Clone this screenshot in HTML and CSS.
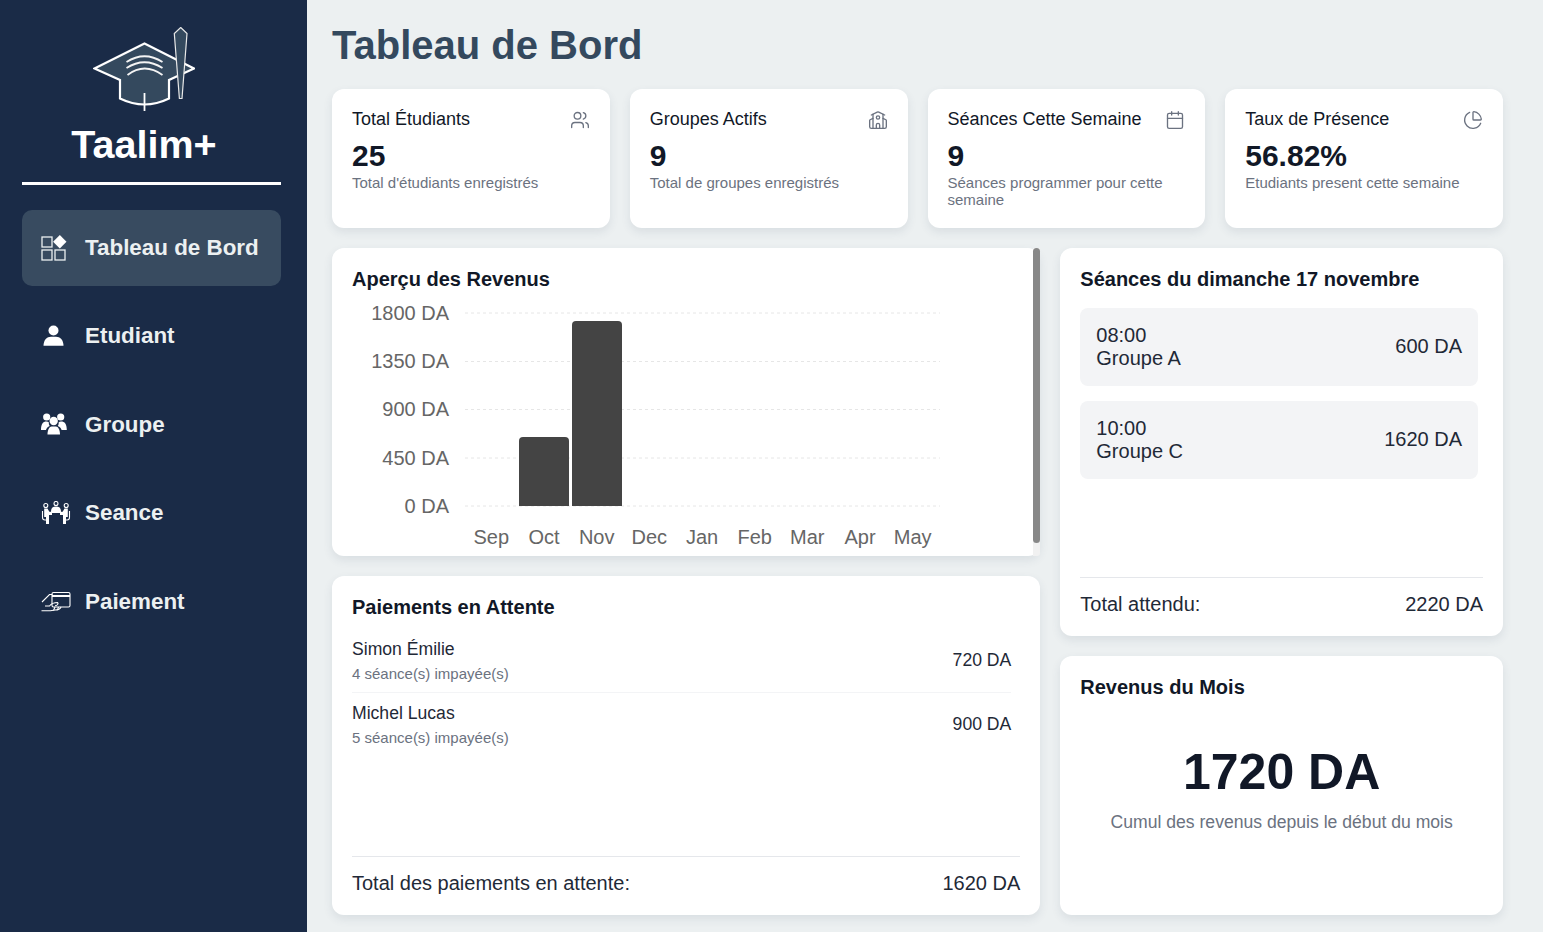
FILE: index.html
```html
<!DOCTYPE html>
<html lang="fr">
<head>
<meta charset="utf-8">
<title>Taalim+ - Tableau de Bord</title>
<link rel="stylesheet" href="styles.css">
</head>
<body>
<aside class="sidebar">
  <div class="brand">
    <svg class="logo" width="102" height="84" viewBox="92 27 102 84">
      <path class="logo-cap" d="M93.5 68.5 143.500 43.500 193 68.500 168 80V98.500Q143.500 110.500 119 98.500V80Z"/>
      <path class="logo-tick" d="M143.500 93V111"/>
      <path class="logo-wave" d="M125.500 62Q143.500 50.500 161.500 62M125.500 68Q143.500 56.500 161.500 68M126.500 75Q143.500 62 161.500 75"/>
      <path class="logo-tassel" d="M179.700 27.500 186 33.500 181 98.500H178.400L173.300 33.500Z"/>
    </svg>
    <div class="brand-name">Taalim+</div>
  </div>
  <nav class="nav">
    <a class="nav-item active">
      <span class="nav-icon">
        <svg width="30" height="26" viewBox="41 235 30 26">
          <g class="outline"><rect x="42" y="237" width="10" height="10"/><rect x="42" y="250" width="10" height="10"/><rect x="55" y="250" width="10" height="10"/></g>
          <path class="solid" d="M59.800 235 66.500 241.700 59.800 248.400 53.100 241.700Z"/>
        </svg>
      </span>
      <span>Tableau de Bord</span>
    </a>
    <a class="nav-item">
      <span class="nav-icon">
        <svg width="30" height="24" viewBox="41 325 30 24">
          <circle class="solid" cx="53.500" cy="331.500" r="5"/>
          <path class="solid" d="M43.500 346.800C43.500 341 47 337.800 51 337.800H56C60 337.800 63.500 341 63.500 346.800Z"/>
        </svg>
      </span>
      <span>Etudiant</span>
    </a>
    <a class="nav-item">
      <span class="nav-icon">
        <svg width="30" height="24" viewBox="41 413 30 24">
          <circle class="solid" cx="46.700" cy="417" r="3.600"/>
          <circle class="solid" cx="60.700" cy="417" r="3.600"/>
          <path class="solid" d="M41 430C41 424 43 421.500 46.500 421.500C47.500 421.500 48.300 421.800 48.800 422.200C48.800 424 49 425 49.800 426C47.500 427 46.300 428.500 46 430Z"/>
          <path class="solid" d="M66.800 430C66.800 424 64.800 421.500 61 421.500C60 421.500 59.200 421.800 58.700 422.200C58.700 424 58.500 425 57.700 426C60 427 61.300 428.500 61.600 430Z"/>
          <circle class="solid" cx="53.700" cy="421" r="4.200"/>
          <path class="solid" d="M47.500 434.500C47.500 429.500 49.500 426.500 51.500 426.500H56C58 426.500 60 429.500 60 434.500Z"/>
        </svg>
      </span>
      <span>Groupe</span>
    </a>
    <a class="nav-item">
      <span class="nav-icon">
        <svg width="30" height="24" viewBox="41 504 30 24">
          <g class="thin">
            <circle cx="56" cy="506.500" r="2"/>
            <circle cx="45.800" cy="508.500" r="2"/>
            <circle cx="66.200" cy="508.500" r="2"/>
            <path d="M42.500 514V520.500C42.500 522 43.500 523 45 523H47"/>
            <path d="M69.500 514V520.500C69.500 522 68.500 523 67 523H65"/>
          </g>
          <path class="solid" d="M51 515C51 511 52.500 509.500 56 509.500S61 511 61 515Z"/>
          <path class="solid" d="M48 514.800H64V516H48Z"/>
          <path class="solid" d="M44.200 511.500H47.500L50 516H52V518H49V527H46V520H44.200Z"/>
          <path class="solid" d="M67.800 511.500H64.500L62 516H60V518H63V527H66V520H67.800Z"/>
        </svg>
      </span>
      <span>Seance</span>
    </a>
    <a class="nav-item">
      <span class="nav-icon">
        <svg width="30" height="22" viewBox="41 592 30 22">
          <g class="thin">
            <path d="M42 603 49.500 595.500H52.500"/>
            <rect x="52" y="593.500" width="18" height="14.500" rx="1.500"/>
            <path d="M41.500 611.800H50.500L55 611C57.500 611 60 610.500 61 608"/>
            <path d="M45 607H49.500C51.500 604.500 53 603.500 57.500 603.500 58.800 604.800 57.500 606.500 55 606.800"/>
            <path d="M55 608 53.500 611.500M58.500 608 57.500 611"/>
          </g>
          <path class="solid" d="M52 596H70V598H52Z"/>
        </svg>
      </span>
      <span>Paiement</span>
    </a>
  </nav>
</aside>

<main class="main">
  <h1 class="page-title">Tableau de Bord</h1>

  <section class="stats">
    <article class="card stat">
      <div class="stat-head">
        <h3 class="stat-title">Total Étudiants</h3>
        <svg class="stat-icon" viewBox="0 0 24 24"><path d="M16 21v-2a4 4 0 0 0-4-4H6a4 4 0 0 0-4 4v2"/><circle cx="9" cy="7" r="4"/><path d="M22 21v-2a4 4 0 0 0-3-3.870"/><path d="M16 3.130a4 4 0 0 1 0 7.750"/></svg>
      </div>
      <div class="stat-value">25</div>
      <p class="stat-desc">Total d'étudiants enregistrés</p>
    </article>
    <article class="card stat">
      <div class="stat-head">
        <h3 class="stat-title">Groupes Actifs</h3>
        <svg class="stat-icon" viewBox="0 0 24 24"><path d="M14 22v-4a2 2 0 1 0-4 0v4"/><path d="m18 10 3.447 1.724a1 1 0 0 1 .553.894V20a2 2 0 0 1-2 2H4a2 2 0 0 1-2-2v-7.382a1 1 0 0 1 .553-.894L6 10"/><path d="M18 5v17"/><path d="m4 6 7.106-3.553a2 2 0 0 1 1.788 0L20 6"/><path d="M6 5v17"/><circle cx="12" cy="9" r="2"/></svg>
      </div>
      <div class="stat-value">9</div>
      <p class="stat-desc">Total de groupes enregistrés</p>
    </article>
    <article class="card stat">
      <div class="stat-head">
        <h3 class="stat-title">Séances Cette Semaine</h3>
        <svg class="stat-icon" viewBox="0 0 24 24"><path d="M8 2v4"/><path d="M16 2v4"/><rect width="18" height="18" x="3" y="4" rx="2"/><path d="M3 10h18"/></svg>
      </div>
      <div class="stat-value">9</div>
      <p class="stat-desc">Séances programmer pour cette semaine</p>
    </article>
    <article class="card stat">
      <div class="stat-head">
        <h3 class="stat-title">Taux de Présence</h3>
        <svg class="stat-icon" viewBox="0 0 24 24"><path d="M21 12c.552 0 1.005-.449.95-.998a10 10 0 0 0-8.953-8.951c-.55-.055-.998.398-.998.95v8a1 1 0 0 0 1 1z"/><path d="M21.210 15.890A10 10 0 1 1 8 2.830"/></svg>
      </div>
      <div class="stat-value">56.82%</div>
      <p class="stat-desc">Etudiants present cette semaine</p>
    </article>
  </section>

  <section class="panels">
    <div class="col col-left">
      <article class="card chart-card">
        <h2 class="card-title">Aperçu des Revenus</h2>
        <svg class="chart" width="600" height="252" viewBox="352 298 600 252">
          <g class="grid">
            <path d="M465 313H940"/><path d="M465 361.500H940"/><path d="M465 409.500H940"/><path d="M465 458H940"/><path d="M465 506H940"/>
          </g>
          <g class="y-labels">
            <text x="449" y="320">1800 DA</text>
            <text x="449" y="368">1350 DA</text>
            <text x="449" y="416">900 DA</text>
            <text x="449" y="465">450 DA</text>
            <text x="449" y="513">0 DA</text>
          </g>
          <path class="bar" d="M519 506V441a4 4 0 0 1 4-4h42a4 4 0 0 1 4 4V506Z"/>
          <path class="bar" d="M572 506V325a4 4 0 0 1 4-4h42a4 4 0 0 1 4 4V506Z"/>
          <g class="x-labels">
            <text x="491.300" y="544">Sep</text>
            <text x="544" y="544">Oct</text>
            <text x="596.700" y="544">Nov</text>
            <text x="649.300" y="544">Dec</text>
            <text x="702" y="544">Jan</text>
            <text x="754.700" y="544">Feb</text>
            <text x="807.300" y="544">Mar</text>
            <text x="860" y="544">Apr</text>
            <text x="912.700" y="544">May</text>
          </g>
        </svg>
        <div class="scroll-track"><div class="scroll-thumb"></div></div>
      </article>

      <article class="card pending-card">
        <h2 class="card-title pending-title">Paiements en Attente</h2>
        <ul class="pending-list">
          <li class="pending-row">
            <div>
              <div class="pending-name">Simon Émilie</div>
              <div class="pending-sub">4 séance(s) impayée(s)</div>
            </div>
            <div class="pending-amount">720 DA</div>
          </li>
          <li class="pending-row">
            <div>
              <div class="pending-name">Michel Lucas</div>
              <div class="pending-sub">5 séance(s) impayée(s)</div>
            </div>
            <div class="pending-amount">900 DA</div>
          </li>
        </ul>
        <div class="total-row"><span>Total des paiements en attente:</span><span>1620 DA</span></div>
      </article>
    </div>

    <div class="col col-right">
      <article class="card sessions-card">
        <h2 class="card-title sessions-title">Séances du dimanche 17 novembre</h2>
        <div class="sessions-list">
          <div class="session-row">
            <div><div>08:00</div><div>Groupe A</div></div>
            <div class="session-amount">600 DA</div>
          </div>
          <div class="session-row">
            <div><div>10:00</div><div>Groupe C</div></div>
            <div class="session-amount">1620 DA</div>
          </div>
        </div>
        <div class="total-row"><span>Total attendu:</span><span>2220 DA</span></div>
      </article>

      <article class="card revenue-card">
        <h2 class="card-title">Revenus du Mois</h2>
        <div class="revenue-value">1720 DA</div>
        <p class="revenue-desc">Cumul des revenus depuis le début du mois</p>
      </article>
    </div>
  </section>
</main>
</body>
</html>
```

FILE: styles.css
```css
* { box-sizing: border-box; }

html, body {
  margin: 0;
  height: 100%;
}

body {
  display: flex;
  overflow: hidden;
  background: #ecf0f1;
  font-family: "Liberation Sans", Arial, sans-serif;
  color: #111827;
}

/* Sidebar */
.sidebar {
  flex: 0 0 307px;
  height: 932px;
  background: #1a2b47;
  padding: 27px 26px 0 22px;
  color: #ecf0f1;
}

.brand {
  display: flex;
  flex-direction: column;
  align-items: center;
  padding-right: 15px;
  height: 158px;
  position: relative;
}

.brand::after {
  content: "";
  position: absolute;
  left: 0;
  right: 0;
  bottom: 0;
  height: 3px;
  background: #fff;
}

.logo { display: block; }
.logo-cap { fill: #34495e; stroke: #fff; stroke-width: 2.2; }
.logo-tick { fill: none; stroke: #fff; stroke-width: 1.8; }
.logo-wave { fill: none; stroke: #f4f4f4; stroke-width: 1.8; }
.logo-tassel { fill: #34495e; stroke: #e8e8e8; stroke-width: 1.2; }

.brand-name {
  margin-top: 11px;
  font-size: 39.500px;
  font-weight: 700;
  line-height: 44px;
  color: #fff;
}

.nav {
  display: flex;
  flex-direction: column;
  gap: 12.400px;
  margin-top: 25px;
}

.nav-item {
  display: flex;
  align-items: center;
  gap: 14px;
  height: 76px;
  padding-left: 19px;
  border-radius: 10px;
  font-size: 22.400px;
  font-weight: 700;
  color: #ecf0f1;
}

.nav-item.active { background: #384b60; }

.nav-icon {
  display: flex;
  flex: 0 0 30px;
  align-items: center;
}

.nav-icon svg { display: block; }
.outline rect { fill: none; stroke: #ecf0f1; stroke-width: 1.3; }
.solid { fill: #fff; }
.thin { fill: none; stroke: #fff; stroke-width: 1.1; }

/* Main */
.main {
  flex: 1;
  min-width: 0;
  height: 932px;
  display: flex;
  flex-direction: column;
  padding: 22px 40px 17px 25px;
}

.page-title {
  margin: 0 0 20px;
  font-size: 40px;
  line-height: 47px;
  font-weight: 700;
  color: #34495e;
}

.card {
  background: #fff;
  border-radius: 12px;
  box-shadow: 0 4px 10px rgba(52, 73, 94, 0.1);
}

.stats {
  display: grid;
  grid-template-columns: repeat(4, 1fr);
  gap: 20px;
}

.stat {
  height: 139px;
  padding: 20px;
}

.stat-head {
  display: flex;
  justify-content: space-between;
  align-items: flex-start;
  height: 28px;
}

.stat-title {
  margin: 0;
  font-size: 18px;
  line-height: 20px;
  font-weight: 400;
  color: #111827;
}

.stat-icon {
  flex: none;
  width: 20px;
  height: 20px;
  margin-top: 1px;
  fill: none;
  stroke: #6b7280;
  stroke-width: 1.6;
  stroke-linecap: round;
  stroke-linejoin: round;
}

.stat-value {
  font-size: 30px;
  line-height: 37px;
  font-weight: 700;
  color: #111827;
}

.stat-desc {
  margin: 0;
  font-size: 15px;
  line-height: 17px;
  color: #6b7280;
}

.panels {
  flex: 1;
  min-height: 0;
  display: grid;
  grid-template-columns: 1.6fr 1fr;
  gap: 20px;
  margin-top: 20px;
}

.col {
  display: flex;
  flex-direction: column;
  gap: 20px;
  min-height: 0;
}

.card-title {
  margin: 0;
  font-size: 20px;
  line-height: 23px;
  font-weight: 700;
  color: #111827;
}

/* Chart */
.chart-card {
  position: relative;
  flex: 0 0 308px;
  padding: 20px 20px 0;
}

.scroll-track {
  position: absolute;
  top: 0;
  right: 0;
  bottom: 0;
  width: 7px;
  border-radius: 0 0 3px 0;
  background: #f1f1f1;
}

.scroll-thumb {
  height: 295px;
  border-radius: 4px;
  background: #888;
}

.chart {
  display: block;
  margin-top: 7px;
}

.grid path {
  stroke: #e6e6e6;
  stroke-width: 1;
  stroke-dasharray: 3 3;
}

.y-labels text,
.x-labels text {
  font-size: 20px;
  fill: #666;
}

.y-labels text { text-anchor: end; }
.x-labels text { text-anchor: middle; }
.bar { fill: #444; }

/* Pending */
.pending-card {
  flex: 1;
  display: flex;
  flex-direction: column;
  padding: 20px;
  min-height: 0;
}

.pending-title { margin-bottom: 10px; }

.pending-list {
  flex: 1;
  margin: 0;
  padding: 0 9px 0 0;
  list-style: none;
}

.pending-row {
  display: flex;
  justify-content: space-between;
  align-items: flex-start;
  height: 64px;
  padding: 10px 0 0;
  border-bottom: 1px solid #f3f4f6;
  font-size: 17.600px;
}

.pending-row:last-child { border-bottom-color: transparent; }

.pending-name { line-height: 21px; color: #1f2937; }

.pending-sub {
  margin-top: 5px;
  font-size: 15px;
  line-height: 17px;
  color: #6b7280;
}

.pending-amount {
  margin-top: 11px;
  line-height: 21px;
  color: #1f2937;
}

.total-row {
  display: flex;
  justify-content: space-between;
  padding-top: 15px;
  border-top: 1px solid #e5e7eb;
  font-size: 20px;
  line-height: 23px;
  color: #1f2937;
}

/* Sessions */
.sessions-card {
  flex: 0 0 388px;
  display: flex;
  flex-direction: column;
  padding: 20px;
}

.sessions-title { margin-bottom: 17px; }

.sessions-list {
  flex: 1;
  display: flex;
  flex-direction: column;
  gap: 15px;
  padding-right: 5px;
}

.session-row {
  display: flex;
  justify-content: space-between;
  align-items: center;
  height: 78px;
  padding: 0 16px;
  border-radius: 8px;
  background: #f3f4f6;
  font-size: 20px;
  line-height: 23px;
  color: #1f2937;
}

.session-amount { margin-bottom: 2px; }

/* Revenue */
.revenue-card {
  flex: 1;
  padding: 20px;
  text-align: center;
}

.revenue-card .card-title { text-align: left; }

.revenue-value {
  margin-top: 44px;
  font-size: 50px;
  line-height: 58px;
  font-weight: 700;
  color: #111827;
}

.revenue-desc {
  margin: 11px 0 0;
  font-size: 17.600px;
  line-height: 21px;
  color: #6b7280;
}
```
